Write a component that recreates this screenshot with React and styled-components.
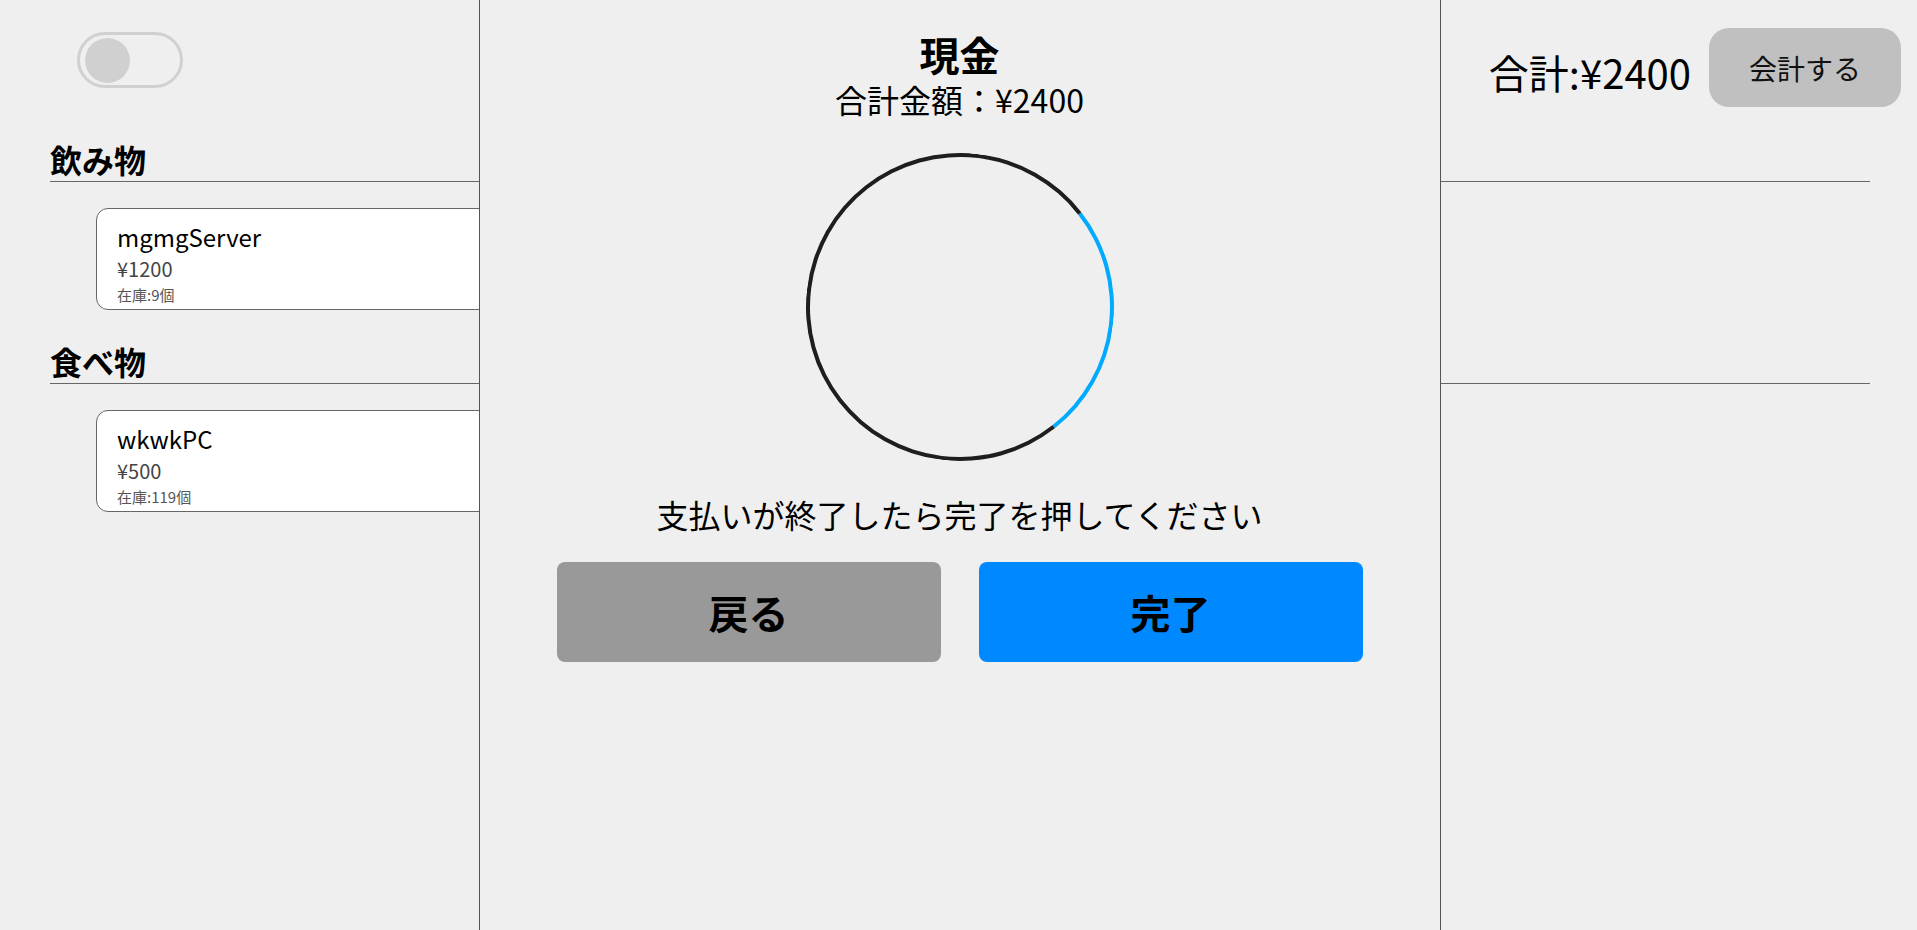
import styled, { createGlobalStyle } from "styled-components";

const GlobalStyle = createGlobalStyle`
  html, body {
    margin: 0;
    padding: 0;
    background: #efefef;
    font-family: "Noto Sans CJK JP", "Noto Sans", sans-serif;
    color: #000;
  }
  * { box-sizing: border-box; }
`;

//#region data
const categories = [
  {
    label: "飲み物",
    items: [{ name: "mgmgServer", price: 1200, stock: 9 }],
  },
  {
    label: "食べ物",
    items: [{ name: "wkwkPC", price: 500, stock: 119 }],
  },
];
//#endregion

export default function App() {
  const total = 2400;
  return (
    <>
      <GlobalStyle />
      <Page>
        <Header>
          <Toggle>
            <Knob />
          </Toggle>
          <TotalArea>
            <TotalText>合計:¥{total}</TotalText>
            <CheckoutButton>会計する</CheckoutButton>
          </TotalArea>
        </Header>
        <Main>
          {categories.map(({ label, items }) => (
            <Section key={label}>
              <SectionTitle>{label}</SectionTitle>
              <CardList>
                {items.map((item) => (
                  <Card key={item.name}>
                    <CardName>{item.name}</CardName>
                    <CardPrice>¥{item.price}</CardPrice>
                    <CardStock>在庫:{item.stock}個</CardStock>
                  </Card>
                ))}
              </CardList>
            </Section>
          ))}
        </Main>
      </Page>
      <Modal>
        <ModalTitle>現金</ModalTitle>
        <ModalAmount>合計金額：¥{total}</ModalAmount>
        <Spinner />
        <Instruction>支払いが終了したら完了を押してください</Instruction>
        <ButtonRow>
          <ActionButton>戻る</ActionButton>
          <ActionButton primary>完了</ActionButton>
        </ButtonRow>
      </Modal>
    </>
  );
}

//#region Styled components
const Page = styled.div`
  min-height: 930px;
`;

const Header = styled.header`
  display: flex;
  justify-content: space-between;
  align-items: flex-start;
  padding: 28px 16px 0 77px;
`;

const Toggle = styled.div`
  margin-top: 4px;
  width: 106px;
  height: 56px;
  border: 3px solid #d0d0d0;
  border-radius: 28px;
  display: flex;
  align-items: center;
  padding-left: 5px;
`;

const Knob = styled.div`
  width: 45px;
  height: 45px;
  border-radius: 50%;
  background: #d0d0d0;
`;

const TotalArea = styled.div`
  display: flex;
  align-items: center;
  gap: 18px;
`;

const TotalText = styled.span`
  font-size: 40px;
  line-height: 48px;
  margin-top: 8px;
`;

const CheckoutButton = styled.button`
  width: 192px;
  height: 79px;
  border: none;
  border-radius: 20px;
  background: #c0c0c0;
  font-family: inherit;
  font-size: 28px;
  color: #111;
  padding: 0;
`;

const Main = styled.main`
  padding: 33px 47px 0 50px;
`;

const Section = styled.section`
  & + & {
    margin-top: 32px;
  }
`;

const SectionTitle = styled.h2`
  margin: 0;
  font-size: 32px;
  font-weight: 700;
  line-height: 38px;
  padding-bottom: 3px;
  border-bottom: 1px solid #666;
`;

const CardList = styled.div`
  display: flex;
  gap: 20px;
  padding: 26px 0 0 46px;
`;

const Card = styled.div`
  width: 420px;
  height: 102px;
  background: #fff;
  border: 1px solid #666;
  border-radius: 12px;
  padding: 12px 20px 0;
  display: flex;
  flex-direction: column;
`;

const CardName = styled.span`
  font-size: 24px;
  line-height: 32px;
`;

const CardPrice = styled.span`
  font-size: 20px;
  line-height: 32px;
  color: #444;
`;

const CardStock = styled.span`
  font-size: 15px;
  line-height: 19px;
  color: #555;
`;

const Modal = styled.div`
  position: fixed;
  top: 0;
  bottom: 0;
  left: calc(50% - 480px);
  width: 962px;
  background: #efefef;
  border-left: 1px solid #555;
  border-right: 1px solid #555;
  display: flex;
  flex-direction: column;
  align-items: center;
  padding-top: 31px;
`;

const ModalTitle = styled.h1`
  margin: 0;
  font-size: 40px;
  font-weight: 700;
  line-height: 46px;
`;

const ModalAmount = styled.div`
  margin-top: 3px;
  font-size: 32px;
  line-height: 38px;
`;

const Spinner = styled.div`
  margin-top: 35px;
  width: 308px;
  height: 308px;
  border-radius: 50%;
  border: 4px solid #1e1e1e;
  border-top-color: #00aaff;
  transform: rotate(97deg);
`;

const Instruction = styled.p`
  margin: 34px 0 0;
  font-size: 32px;
  line-height: 38px;
`;

const ButtonRow = styled.div`
  margin-top: 29px;
  display: flex;
  gap: 38px;
`;

const ActionButton = styled.button`
  width: 384px;
  height: 100px;
  border: none;
  border-radius: 8px;
  background: ${({ primary }) => (primary ? "#0088ff" : "#999999")};
  font-family: inherit;
  font-size: 40px;
  font-weight: 700;
  color: #000;
  padding: 0;
`;
//#endregion
